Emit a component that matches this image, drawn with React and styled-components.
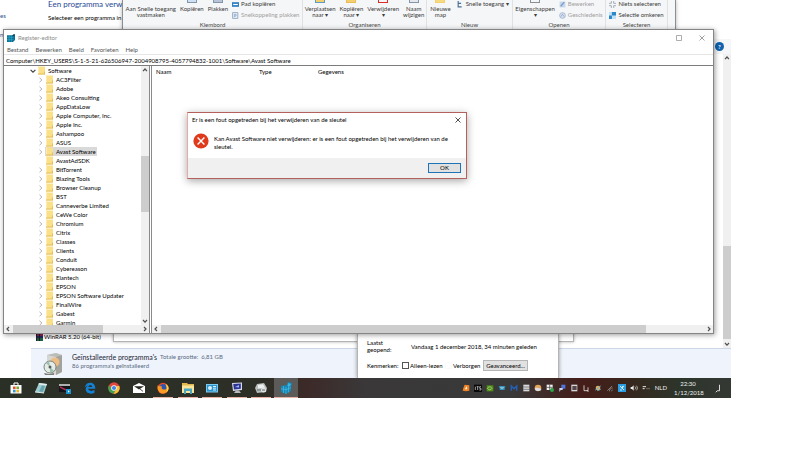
import React, { useState } from "react";
import styled, { createGlobalStyle } from "styled-components";

const treeKeys = [
  "AC3Filter",
  "Adobe",
  "Akeo Consulting",
  "AppDataLow",
  "Apple Computer, Inc.",
  "Apple Inc.",
  "Ashampoo",
  "ASUS",
  "Avast Software",
  "AvastAdSDK",
  "BitTorrent",
  "Blazing Tools",
  "Browser Cleanup",
  "BST",
  "Canneverbe Limited",
  "CeWe Color",
  "Chromium",
  "Citrix",
  "Classes",
  "Clients",
  "Conduit",
  "Cybereason",
  "Elantech",
  "EPSON",
  "EPSON Software Updater",
  "FinalWire",
  "Gabest",
  "Garmin",
];

const keysWithoutChildren = ["AvastAdSDK"];

const menuItems = ["Bestand", "Bewerken", "Beeld", "Favorieten", "Help"];

const REG_PATH =
  "Computer\\HKEY_USERS\\S-1-5-21-626506947-2004908795-4057794832-1001\\Software\\Avast Software";

// ---- icons ----

const Svg = ({ size = 12, children, ...rest }) => (
  <svg width={size} height={size} viewBox="0 0 12 12" aria-hidden="true" {...rest}>
    {children}
  </svg>
);

const FolderIcon = () => (
  <svg width="7" height="9" viewBox="0 0 7 9" aria-hidden="true">
    <path d="M0 .5h7v8H0z" fill="#fbe08a" />
    <path d="M0 .5h1v8H0z" fill="#fdebb0" />
    <path d="M6 5.5h1v3H0v-1h6z" fill="#e6bd58" />
  </svg>
);

const Chevron = ({ open }) => (
  <svg width="6" height="6" viewBox="0 0 6 6" aria-hidden="true">
    <path
      d={open ? "M.6 1.8L3 4.2l2.4-2.4" : "M1.5.8L3.9 3 1.5 5.2"}
      fill="none"
      stroke={open ? "#404040" : "#9a9a9a"}
      strokeWidth={open ? 1.2 : 0.8}
    />
  </svg>
);

const arrows = {
  up: "M1 4.2L3 2l2 2.2",
  down: "M1 2L3 4.2 5 2",
  left: "M4 1L2 3l2 2",
  right: "M2 1l2 2-2 2",
};

const Arrow = ({ dir }) => (
  <svg width="6" height="6" viewBox="0 0 6 6" aria-hidden="true">
    <path d={arrows[dir]} fill="none" stroke="#505050" strokeWidth="1.2" />
  </svg>
);

const RegIcon = ({ size = 8 }) => (
  <Svg size={size}>
    <path d="M0 2h8l4-2v9l-3 3H0z" fill="#0b6f95" />
    <path d="M0 5h10M0 8.5h10M3.3 2v10M6.6 2v10" stroke="#35b3d8" strokeWidth=".8" />
    <path d="M8.5 1.5L11 0v3H8.5z" fill="#12364a" />
  </Svg>
);

const ErrorIcon = () => (
  <svg width="16" height="16" viewBox="0 0 16 16" aria-hidden="true">
    <circle cx="8" cy="8" r="7.6" fill="#e03a1c" />
    <path d="M4.6 4.6l6.8 6.8M11.4 4.6l-6.8 6.8" stroke="#fff" strokeWidth="1.4" />
  </svg>
);

const CloseIcon = ({ color = "#222" }) => (
  <svg width="6" height="6" viewBox="0 0 6 6" aria-hidden="true">
    <path d="M.5.5l5 5M5.5.5l-5 5" stroke={color} strokeWidth=".8" />
  </svg>
);

const ProgramsIcon = () => (
  <svg width="20" height="24" viewBox="0 0 20 24" aria-hidden="true">
    <path d="M4 3l9-2 6 2v17l-6 3-9-3z" fill="#d6d6d2" />
    <path d="M13 4l6-1v17l-6 3z" fill="#a3a39e" />
    <path d="M4 3l9-2 6 2-6 2z" fill="#bcbcb8" />
    <circle cx="12" cy="10" r="4.5" fill="#edbd83" />
    <circle cx="7" cy="15" r="6" fill="#e5ebe7" stroke="#707975" strokeWidth=".9" />
    <path d="M7 15L3 11l3-2zM7 15l4 4-4 2z" fill="#9bbfac" />
    <circle cx="7" cy="15" r="1.5" fill="#59605c" />
    <path d="M1 21l5 1 5-1v2H2z" fill="#7c7c78" />
  </svg>
);

const WinRarIcon = () => (
  <svg width="7" height="8" viewBox="0 0 7 8" aria-hidden="true">
    <path d="M0 0h7v3H0z" fill="#8c2257" />
    <path d="M0 3h7v2H0z" fill="#212a68" />
    <path d="M0 5h7v3H0z" fill="#1d6044" />
    <path d="M0 0h1v8H0zM3 0h1v8H3z" fill="#20201e" />
  </svg>
);

const taskIcons = {
  store: (
    <>
      <path d="M4 3V1h4v2" fill="none" stroke="#fff" />
      <path d="M.5 3h11v8.5H.5z" fill="#fff" />
      <path d="M3 4.5h2.6v2.6H3z" fill="#e4542b" />
      <path d="M6.4 4.5H9v2.6H6.4z" fill="#7bab31" />
      <path d="M3 7.8h2.6v2.6H3z" fill="#2f95d3" />
      <path d="M6.4 7.8H9v2.6H6.4z" fill="#efb323" />
    </>
  ),
  notes: (
    <>
      <path d="M4 1l8 1-3 9-9-1z" fill="#9ccbd1" />
      <path d="M4 1l8 1-.5 1.4-8-1z" fill="#e4eeee" />
      <path d="M7 3.5l3 .5-2 6-4-.4z" fill="#6aa4ad" />
      <path d="M0 10l9 1" stroke="#dce8e6" />
    </>
  ),
  movie: (
    <>
      <path d="M0 2h11v2H0z" fill="#b0b0b0" />
      <path d="M0 4h11v6H0z" fill="#12161a" />
      <path d="M1 5l6 3" stroke="#a92d51" strokeWidth="1.5" />
      <path d="M7 7h5v5H7z" fill="#1c92cc" />
      <path d="M9 8.2v2.4l1.7-1.2z" fill="#fff" />
    </>
  ),
  edge: (
    <path
      d="M.8 5.8C1.2 2.6 3.3.7 6.3.7c3.2 0 5.1 2.3 5 6.1H4.2c.3 2 3.4 2.9 6.3 1.3v2.6C6.4 13 1.6 11 1.7 7.1 1.8 5.2 3 4 4.4 3.4 2.8 3.5 1.6 4.5.8 5.8zM4.3 5h3.9c0-2.3-3.6-2.3-3.9 0z"
      fill="#1581d2"
    />
  ),
  chrome: (
    <>
      <circle cx="6" cy="6" r="5.7" fill="#e1483a" />
      <path d="M1 3.2A5.7 5.7 0 0 0 5.6 11.7L8 7.5 4 7z" fill="#43a352" />
      <path d="M11.3 4A5.7 5.7 0 0 1 5.6 11.7L8.5 7V4z" fill="#f4c536" />
      <circle cx="6" cy="6" r="2.8" fill="#fff" />
      <circle cx="6" cy="6" r="2.1" fill="#4384e6" />
    </>
  ),
  mail: (
    <>
      <path d="M0 4l6-3 6 3v7H0z" fill="#fff" />
      <path d="M1 4.3h10L6 7.5z" fill="#25291f" />
      <path d="M7 7l3 2.4" stroke="#25291f" strokeWidth=".8" />
    </>
  ),
  firefox: (
    <>
      <circle cx="6" cy="6.3" r="5.5" fill="#ec4a27" />
      <circle cx="6.3" cy="5.5" r="3.5" fill="#2f55b4" />
      <path d="M.8 3C2 5 3 4 5 4.4 4 6 5 8 8 7.5c2 0 3-2.5 2.2-5C13 6 11 11 6.5 11.5 2.5 11.7-.3 8 .8 3z" fill="#fa9a23" />
      <path d="M8.3 1.7c4 2 4.2 6.2 1 8.6.8-3 .5-5.5-1-8.6z" fill="#fcd33b" />
    </>
  ),
  explorer: (
    <>
      <path d="M0 1h5l1 1h6v9H0z" fill="#e3b94f" />
      <path d="M0 3.5h12V11H0z" fill="#fbe49b" />
      <path d="M2 6.5h8V12H8V9H4v3H2z" fill="#4aa7c4" />
    </>
  ),
  control: (
    <>
      <path d="M0 2h12v8.5H0z" fill="#7cc9ef" />
      <path d="M1 3h10v6.5H1z" fill="#2b91cb" />
      <circle cx="4" cy="6" r="2" fill="#d8f0fb" />
      <path d="M7 4.5h3M7 6.2h3M7 8h3" stroke="#d8f0fb" />
    </>
  ),
  monitor: (
    <>
      <path d="M1 1l10-.5v7.5L2 9z" fill="#d8d9ec" />
      <path d="M2.2 2l7.6-.4v5.2L3 7.6z" fill="#2c3390" />
      <path d="M4 5l4-2v2.5z" fill="#9db5ee" />
      <path d="M5 8.5h3l2 2.5H3z" fill="#b9b9c2" />
    </>
  ),
  disk: (
    <>
      <path d="M2 2l7-1 3 5-1 4-9 1-2-5z" fill="#b8bdbd" />
      <path d="M3 3l5-.7 2 3.2-7 1z" fill="#eef0f0" />
      <circle cx="8.5" cy="8" r="2.5" fill="#dfe4e4" />
      <path d="M2 8h4M7 8h3" stroke="#646a6a" />
    </>
  ),
  regedit: (
    <>
      <path d="M1 4l6-1 1-3 4 1-1 4v4l-5 3-5-2z" fill="#1489b8" />
      <path d="M1 6.7l5 1 5-2M3.5 4v7M6 5v7M8.5 3v7.5" stroke="#58c0e4" strokeWidth=".6" fill="none" />
      <path d="M8 1l3 1-1 2.5-2.5-.5z" fill="#3ab4df" />
    </>
  ),
};

const taskButtons = [
  { id: "store", label: "Store" },
  { id: "notes", label: "Kladblok" },
  { id: "movie", label: "Movie Maker" },
  { id: "edge", label: "Edge" },
  { id: "chrome", label: "Chrome" },
  { id: "mail", label: "Mail" },
  { id: "firefox", label: "Firefox", running: true },
  { id: "explorer", label: "Verkenner", running: true },
  { id: "control", label: "Configuratiescherm", running: true },
  { id: "monitor", label: "Systeem", running: true },
  { id: "disk", label: "Schijfopruiming", running: true },
  { id: "regedit", label: "Register-editor", running: true, active: true },
];

const trayIcons = [
  <>
    <path d="M4 1l7 1v8l-5 1-5-1 1-4z" fill="#f18222" />
    <path d="M4 8l3-5 1 5z" fill="#fff0dd" />
  </>,
  <>
    <path d="M0 1h12v11H0z" fill="#080808" />
    <path d="M2 4v5M4 4h3M5.5 4v5M10.5 4H8.5v2.5h2V9H8" stroke="#e5e5e5" fill="none" />
  </>,
  <>
    <path d="M1 2h10v9H1z" fill="#4e8f16" />
    <path d="M2 6.5c2-3 5-3 7 0-2 3-5 3-7 0z" fill="none" stroke="#cfe6a6" />
  </>,
  <>
    <path d="M1 3h10l-1 6H3z" fill="#2c88b5" />
    <path d="M3 5h6M4 7h4" stroke="#c5e5f3" />
  </>,
  <path d="M2 10V3l4 4 4-4v7" fill="none" stroke="#2560b8" strokeWidth="2.2" />,
  <>
    <path d="M2 1h9v10H2z" fill="#d9d9d9" />
    <path d="M2 4.5h9M2 8h9" stroke="#55585a" />
  </>,
  <>
    <circle cx="6" cy="6" r="5" fill="#e1a55b" />
    <path d="M1 7c2-3 8-1 10 1-1 3-8 4-10-1z" fill="#d8dde8" />
  </>,
  <>
    <path d="M1 1h9v8H1z" fill="#f4f4f4" />
    <path d="M5.5 1v8M1 5h9" stroke="#333" />
    <circle cx="9" cy="9" r="3" fill="#2ba34a" />
  </>,
  <>
    <path d="M5 1h6v6H5z" fill="#5272dc" />
    <path d="M2 6h5v3H4l-2 3z" fill="#c8d3f4" />
  </>,
  <>
    <path d="M2 1h9v10H2z" fill="#d7d7d9" />
    <path d="M3.5 3H10v6H3.5z" fill="#53474c" />
  </>,
  <path d="M3 2v8h6V5M7 10l3 1" fill="none" stroke="#e8e8e8" strokeWidth="1.2" />,
  <>
    <circle cx="6" cy="6" r="3.5" fill="#ddab66" />
    <path d="M2 9l8-6M5 10l5-2" stroke="#69b6cc" strokeWidth="1.5" />
  </>,
  <path d="M2 10l7-7M5 11c0-3 2-5 5-5M8 11c0-1 1-2 2-2" fill="none" stroke="#a8a8a8" />,
  <>
    <path d="M0 0h12v12H0z" fill="#2c9de0" />
    <path d="M3 3l6 6M9 3L5 6M3 9h3M7 3v3" stroke="#e5f6ff" strokeWidth="1.3" />
  </>,
  <>
    <path d="M1 4.5h2L5.5 2v8L3 7.5H1z" fill="#eee" />
    <path d="M7.5 4c1 1 1 3 0 4M9.5 2.5c2 2 2 5 0 7" fill="none" stroke="#eee" />
  </>,
  <path d="M1 4h5M1 7h3M7 7h1M10 7h1" stroke="#e8e8e8" strokeWidth="1.5" />,
];

// ---- shared parts ----

const GlobalStyle = createGlobalStyle`
  * {
    box-sizing: border-box;
  }
  body {
    margin: 0;
    background: #fff;
    font-family: Lato, "Open Sans", sans-serif;
    font-size: 6px;
    line-height: 8px;
    color: #000;
  }
  button, input {
    font: inherit;
    color: inherit;
    margin: 0;
    padding: 0;
    border: none;
    background: none;
  }
  svg {
    display: block;
    flex: none;
  }
  h1, h2, p, ul {
    margin: 0;
    padding: 0;
    font-weight: 400;
  }
`;

const Page = styled.div`
  min-height: 100vh;
  padding: 0 69px 52px 0;
  display: flex;
`;

const Desktop = styled.div`
  flex: 1;
  display: flex;
  flex-direction: column;
  overflow: hidden;
`;

const Workspace = styled.main`
  position: relative;
  flex: 1;
  overflow: hidden;
`;

const ScrollTrack = styled.div`
  display: flex;
  flex-direction: ${(p) => (p.$vertical ? "column" : "row")};
  align-items: center;
  width: ${(p) => (p.$vertical ? "8px" : "auto")};
  height: ${(p) => (p.$vertical ? "auto" : "8px")};
  padding: ${(p) => (p.$vertical ? "1px 0" : "0 1px")};
  gap: 1px;
  background: #f0f0f0;
`;

const Space = styled.div`
  flex: ${(p) => p.$grow} 1 0;
`;

const Thumb = styled.div`
  flex: ${(p) => p.$grow} 1 0;
  align-self: stretch;
  background: #cdcdcd;
`;

const ScrollBar = ({ vertical, before, size, after }) => (
  <ScrollTrack $vertical={vertical}>
    <Arrow dir={vertical ? "up" : "left"} />
    <Space $grow={before} />
    <Thumb $grow={size} />
    <Space $grow={after} />
    <Arrow dir={vertical ? "down" : "right"} />
  </ScrollTrack>
);

// ---- installed programs window (at the back) ----

const Programs = styled.section`
  height: 100%;
  display: flex;
`;

const SideLinks = styled.nav`
  width: 31px;
  padding-top: 12px;
  display: flex;
  flex-direction: column;
  gap: 11px;
  color: #1d4f8f;

  a {
    color: inherit;
    text-decoration: none;
  }
`;

const ProgramsMain = styled.div`
  flex: 1;
  display: flex;
  flex-direction: column;
`;

const ProgramsBody = styled.div`
  flex: 1;
  display: flex;
  justify-content: space-between;
`;

const ProgramsText = styled.div`
  display: flex;
  flex-direction: column;
  justify-content: space-between;
  padding-bottom: 7px;

  h1 {
    padding: 0 17px;
    font-size: 8px;
    line-height: 8px;
    color: #1f4a94;
  }
  p {
    padding: 6px 17px;
  }
`;

const ProgramRow = styled.div`
  display: flex;
  align-items: center;
  gap: 1px;
  padding-left: 5px;
`;

const ScrollColumn = styled.div`
  width: 17px;
  padding-top: 39px;
  display: flex;
  flex-direction: column;
  align-items: flex-end;

  > :last-child {
    flex: 1;
  }
`;

const HelpStrip = styled.div`
  align-self: stretch;
  height: 15px;
  padding: 3px 1px;
  background: #f5f6f7;
`;

const HelpButton = styled.button`
  width: 9px;
  height: 9px;
  border-radius: 50%;
  background: #0f62ae;
  color: #fff;
  font-weight: 700;
  line-height: 8px;
`;

const DetailsBar = styled.div`
  height: 30px;
  display: flex;
  gap: 9px;
  padding: 3px 12px;
  border-top: 1px solid #ccd6e6;
  background: #eff3fb;
  color: #5a6b84;

  h2 {
    font-size: 7px;
    color: #1b2636;
  }
`;

const DetailsLine = styled.div`
  display: flex;
  align-items: center;
  gap: ${(p) => p.$gap || 3}px;
  height: 9px;
`;

// ---- explorer window with the ribbon ----

const Explorer = styled.section`
  position: absolute;
  top: 0;
  left: 122px;
  width: 554px;
  height: 60px;
  border: solid #8a8f94;
  border-width: 0 1px;
  background: #f5f6f7;
  box-shadow: 0 0 4px rgba(0, 0, 0, 0.3);
`;

const Ribbon = styled.div`
  display: flex;
  height: 29px;
`;

const RibbonGroup = styled.div`
  width: ${(p) => p.$width}px;
  display: flex;
  flex-direction: column;
  justify-content: space-between;
  border-right: 1px solid #dfe1e3;
  color: #4a4a4a;
  text-align: center;
`;

const RibbonTools = styled.div`
  display: flex;
  justify-content: center;
  gap: ${(p) => p.$gap || 4}px;
`;

const BigTool = styled.button`
  display: flex;
  flex-direction: column;
  align-items: center;
  line-height: 6px;
  white-space: pre;
  color: ${(p) => (p.disabled ? "#a0a0a0" : "#3c3c3c")};
`;

const ToolPicture = styled.span`
  width: 10px;
  height: 3px;
  margin-bottom: 3px;
  border: solid ${(p) => p.$edge || "#8397ab"};
  border-width: 0 1px 1px;
  background: ${(p) => p.$color};
`;

const SmallTools = styled.div`
  display: flex;
  flex-direction: column;
  gap: 3px;
`;

const SmallTool = styled.button`
  display: flex;
  align-items: center;
  gap: 2px;
  line-height: 8px;
  white-space: nowrap;
  color: ${(p) => (p.disabled ? "#a0a0a0" : "#3c3c3c")};
`;

const Big = ({ children, color, edge, disabled }) => (
  <BigTool disabled={disabled}>
    <ToolPicture $color={color} $edge={edge} />
    {children}
  </BigTool>
);

const Small = ({ children, icon, disabled }) => (
  <SmallTool disabled={disabled}>
    <Svg size={7}>{icon}</Svg>
    {children}
  </SmallTool>
);

const sheet = (
  <>
    <path d="M1 1h9v10H1z" fill="#e9f0f8" stroke="#8ea6c2" strokeWidth="1.5" />
    <path d="M4 9V4h3v3H4" fill="none" stroke="#6f92c0" />
  </>
);

const ExplorerWindow = () => (
  <Explorer>
    <Ribbon>
      <RibbonGroup $width={180}>
        <RibbonTools>
          <Big color="#f5f6f7" edge="#f5f6f7">{"Aan Snelle toegang\nvastmaken"}</Big>
          <Big color="#cfe0f4">Kopiëren</Big>
          <Big color="#b9c4d8">Plakken</Big>
          <SmallTools>
            <Small icon={<><path d="M0 2h12v8H0z" fill="#2f7fc2" /><path d="M2 6h8" stroke="#fff" strokeWidth="2" /></>}>
              Pad kopiëren
            </Small>
            <Small icon={sheet} disabled>Snelkoppeling plakken</Small>
          </SmallTools>
        </RibbonTools>
        Klembord
      </RibbonGroup>
      <RibbonGroup $width={124}>
        <RibbonTools>
          <Big color="#f3cf6d" edge="#5b9cc4">{"Verplaatsen\nnaar ▾"}</Big>
          <Big color="#f3cf6d" edge="#e6bd58">{"Kopiëren\nnaar ▾"}</Big>
          <Big color="#f5f6f7" edge="#e02b2b">{"Verwijderen\n▾"}</Big>
          <Big color="#e4e7eb">{"Naam\nwijzigen"}</Big>
        </RibbonTools>
        Organiseren
      </RibbonGroup>
      <RibbonGroup $width={86}>
        <RibbonTools $gap={6}>
          <Big color="#f7da7e" edge="#f3cf6d">{"Nieuwe\nmap"}</Big>
          <SmallTools>
            <Small icon={<path d="M2 0v10h6M2 4h5" fill="none" stroke="#4a7196" strokeWidth="2" />}>
              Snelle toegang ▾
            </Small>
          </SmallTools>
        </RibbonTools>
        Nieuw
      </RibbonGroup>
      <RibbonGroup $width={93}>
        <RibbonTools>
          <Big color="#f5f6f7" edge="#8a8f94">{"Eigenschappen\n▾"}</Big>
          <SmallTools>
            <Small icon={<><path d="M1 1h10v10H1z" fill="#c6d5ea" /><path d="M3 9l6-7" stroke="#7a9aca" strokeWidth="2" /></>} disabled>
              Bewerken
            </Small>
            <Small icon={<><circle cx="6" cy="6" r="5" fill="#d4deec" stroke="#90a7ca" /><path d="M3 8l3-4 3 4" fill="none" stroke="#7b96c2" /></>} disabled>
              Geschiedenis
            </Small>
          </SmallTools>
        </RibbonTools>
        Openen
      </RibbonGroup>
      <RibbonGroup $width={62}>
        <RibbonTools>
          <SmallTools>
            <Small icon={<path d="M4 0v4H0M8 0v4h4M4 12V8H0M8 12V8h4" fill="none" stroke="#9aa5b2" strokeWidth="1.5" />}>
              Niets selecteren
            </Small>
            <Small icon={<><path d="M0 0h12v12H0z" fill="#bfe0f6" /><path d="M5 0h7v6H5zM0 6h5v6H0z" fill="#2b87c8" /></>}>
              Selectie omkeren
            </Small>
          </SmallTools>
        </RibbonTools>
        Selecteren
      </RibbonGroup>
    </Ribbon>
  </Explorer>
);

// ---- bottom of the message window and the file properties ----

const LowerWindow = styled.div`
  position: absolute;
  left: 113px;
  bottom: 36px;
  width: 461px;
  height: 40px;
  border: 1px solid #b4b4b4;
  background: #fff;
  box-shadow: 0 0 3px rgba(0, 0, 0, 0.3);
`;

const Properties = styled.section`
  position: absolute;
  left: 357px;
  bottom: 0;
  width: 202px;
  padding: 0 10px 6px 9px;
  border: solid #b4b4b4;
  border-width: 0 1px;
  background: #fff;
  box-shadow: 0 0 4px rgba(0, 0, 0, 0.4);
`;

const PropertyRow = styled.div`
  display: grid;
  grid-template-columns: ${(p) => p.$columns};
  align-items: center;
  height: ${(p) => p.$height}px;
  line-height: 7px;
`;

const CheckLabel = styled.label`
  display: flex;
  align-items: center;
  gap: 1px;
`;

const CheckBox = styled.input.attrs({ type: "checkbox" })`
  appearance: none;
  width: 7px;
  height: 7px;
  border: 1px solid ${(p) => (p.$faint ? "#fafafa" : "#555")};
  background: #fff;
`;

const AdvancedButton = styled.button`
  height: 11px;
  border: 1px solid #b5b5b5;
  background: #e1e1e1;
`;

// ---- registry editor ----

const Editor = styled.section`
  position: absolute;
  top: 29px;
  right: 17px;
  bottom: 44px;
  left: 3px;
  display: flex;
  flex-direction: column;
  border: 1px solid #858585;
  background: #fff;
  box-shadow: 1px 1px 5px rgba(0, 0, 0, 0.4);
`;

const EditorTitle = styled.header`
  display: flex;
  align-items: center;
  gap: 3px;
  height: 15px;
  padding-left: 3px;
  color: #8c8c8c;

  h1 {
    flex: 1;
    font-size: 6px;
  }
`;

const WindowButtons = styled.div`
  display: flex;
`;

const WindowButton = styled.button`
  width: 23px;
  display: flex;
  justify-content: center;
`;

const MenuBar = styled.nav`
  display: flex;
  gap: 7px;
  height: 9px;
  padding-left: 3px;
  color: #555;
`;

const AddressBar = styled.input`
  width: 100%;
  height: 12px;
  padding: 0 2px;
  border-top: 1px solid #e6e6e6;
  border-bottom: 1px solid #7c7c7c;
  outline: none;
`;

const Panes = styled.div`
  flex: 1;
  min-height: 0;
  display: flex;
`;

const TreePane = styled.div`
  width: 146px;
  display: flex;
  flex-direction: column;
  border-right: 1px solid #8a8a8a;
`;

const TreeBody = styled.div`
  flex: 1;
  min-height: 0;
  display: flex;
`;

const Tree = styled.ul`
  flex: 1;
  overflow: hidden;
  list-style: none;
`;

const TreeItem = styled.li`
  display: flex;
  align-items: center;
  height: 9px;
  padding-left: ${(p) => (p.$root ? 26 : 34)}px;
`;

const Twisty = styled.span`
  width: 7px;
`;

const KeyButton = styled.button`
  display: flex;
  align-items: center;
  gap: 3px;
  height: 9px;
  padding: 0 1px;
  white-space: nowrap;
  background: ${(p) => (p.$selected ? "#d9d9d9" : "none")};
`;

const ValuePane = styled.div`
  flex: 1;
  display: flex;
  flex-direction: column;
  justify-content: space-between;
  margin-left: 1px;
  border-left: 1px solid #8a8a8a;
`;

const ValueTable = styled.table`
  width: 100%;
  table-layout: fixed;
  border-collapse: collapse;

  th {
    width: 103px;
    height: 11px;
    padding: 0 4px;
    text-align: left;
    font-weight: 400;
  }
  th:nth-child(2) {
    width: 59px;
  }
  th:last-child {
    width: auto;
  }
`;

const RegistryEditor = () => {
  const [selected, setSelected] = useState("Avast Software");

  return (
    <Editor>
      <EditorTitle>
        <RegIcon />
        <h1>Register-editor</h1>
        <WindowButtons>
          <WindowButton aria-label="Maximaliseren">
            <svg width="6" height="6" viewBox="0 0 6 6">
              <path d="M.5 5.5v-5h5v5z" fill="none" stroke="#999" strokeWidth=".8" />
            </svg>
          </WindowButton>
          <WindowButton aria-label="Sluiten">
            <CloseIcon color="#888" />
          </WindowButton>
        </WindowButtons>
      </EditorTitle>
      <MenuBar>
        {menuItems.map((item) => (
          <button key={item}>{item}</button>
        ))}
      </MenuBar>
      <AddressBar aria-label="Pad" defaultValue={REG_PATH} />
      <Panes>
        <TreePane>
          <TreeBody>
            <Tree>
              <TreeItem $root>
                <Twisty><Chevron open /></Twisty>
                <KeyButton><FolderIcon />Software</KeyButton>
              </TreeItem>
              {treeKeys.map((key) => (
                <TreeItem key={key}>
                  <Twisty>{!keysWithoutChildren.includes(key) && <Chevron />}</Twisty>
                  <KeyButton $selected={key === selected} onClick={() => setSelected(key)}>
                    <FolderIcon />
                    {key}
                  </KeyButton>
                </TreeItem>
              ))}
            </Tree>
            <ScrollBar vertical before={81} size={56} after={104} />
          </TreeBody>
          <ScrollBar before={0} size={86} after={36} />
        </TreePane>
        <ValuePane>
          <ValueTable>
            <thead>
              <tr>
                <th>Naam</th>
                <th>Type</th>
                <th>Gegevens</th>
              </tr>
            </thead>
          </ValueTable>
          <ScrollBar before={0} size={484} after={58} />
        </ValuePane>
      </Panes>
    </Editor>
  );
};

// ---- error message ----

const Dialog = styled.section`
  position: absolute;
  top: 112px;
  left: 187px;
  width: 280px;
  border: 1px solid #b4605c;
  border-left-color: #eba9a6;
  background: #fff;
  box-shadow: 0 2px 8px rgba(0, 0, 0, 0.35);
`;

const DialogTitle = styled.header`
  display: flex;
  align-items: center;
  justify-content: space-between;
  height: 14px;
  padding: 0 5px 0 4px;

  h2 {
    font-size: 6px;
  }
`;

const DialogBody = styled.div`
  display: flex;
  gap: 5px;
  height: 31px;
  padding: 6px 16px 0 5px;

  p {
    padding-top: 2px;
  }
`;

const DialogFooter = styled.footer`
  display: flex;
  justify-content: flex-end;
  padding: 5px;
  background: #f0f0f0;
`;

const OkButton = styled.button`
  width: 33px;
  height: 10px;
  border: 1px solid #1f74b8;
  background: #e1e1e1;
  line-height: 8px;
`;

// ---- taskbar ----

const Taskbar = styled.footer`
  display: flex;
  justify-content: space-between;
  height: 20px;
  padding-left: 4px;
  background: linear-gradient(
    90deg,
    #2b3026 0%,
    #2d2f27 36%,
    #3c2a28 42%,
    #3a3839 50%,
    #393939 70%,
    #451c18 80%,
    #35291f 87%,
    #2c352b 93%,
    #343833 100%
  );
  color: #f0f0f0;
`;

const TaskList = styled.div`
  display: flex;
  width: 294px;
`;

const TaskButton = styled.button`
  flex: 1;
  display: flex;
  align-items: center;
  justify-content: center;
  background-color: ${(p) => (p.$active ? "#5c5b59" : "transparent")};
  background-image: ${(p) => (p.$running ? "linear-gradient(#eab1a6, #eab1a6)" : "none")};
  background-position: bottom;
  background-size: ${(p) => (p.$active ? "24px" : "20px")} 1px;
  background-repeat: no-repeat;
`;

const Tray = styled.div`
  display: flex;
  align-items: center;
  padding-right: 10px;
`;

const TrayIcon = styled.button`
  width: 12px;
  display: flex;
  justify-content: center;
`;

const Language = styled.button`
  padding: 0 7px 0 3px;
`;

const Clock = styled.div`
  width: 28px;
  line-height: 9px;
  text-align: center;
`;

const NotificationButton = styled.button`
  margin-left: 10px;
`;

export default function App() {
  return (
    <Page>
      <GlobalStyle />
      <Desktop>
        <Workspace>
          <Programs>
            <SideLinks>
              <a href="#updates">es</a>
              <a href="#features">n</a>
            </SideLinks>
            <ProgramsMain>
              <ProgramsBody>
                <ProgramsText>
                  <div>
                    <h1>Een programma verwijderen</h1>
                    <p>Selecteer een programma in de lijst</p>
                  </div>
                  <ProgramRow>
                    <WinRarIcon />
                    WinRAR 5.20 (64-bit)
                  </ProgramRow>
                </ProgramsText>
                <ScrollColumn>
                  <HelpStrip>
                    <HelpButton>?</HelpButton>
                  </HelpStrip>
                  <ScrollBar vertical before={184} size={94} after={0} />
                </ScrollColumn>
              </ProgramsBody>
              <DetailsBar>
                <ProgramsIcon />
                <div>
                  <DetailsLine>
                    <h2>Geïnstalleerde programma's</h2>
                    <span>Totale grootte:</span>
                    <span>6,81 GB</span>
                  </DetailsLine>
                  <DetailsLine>86 programma's geïnstalleerd</DetailsLine>
                </div>
              </DetailsBar>
            </ProgramsMain>
          </Programs>

          <ExplorerWindow />
          <LowerWindow />

          <Properties>
            <PropertyRow $columns="44px 1fr" $height={24}>
              <span>Laatst<br />geopend:</span>
              <span>Vandaag 1 december 2018, 34 minuten geleden</span>
            </PropertyRow>
            <PropertyRow $columns="35px 43px 38px 45px" $height={14}>
              <span>Kenmerken:</span>
              <CheckLabel>
                <CheckBox />
                Alleen-lezen
              </CheckLabel>
              <CheckLabel>
                <CheckBox $faint />
                Verborgen
              </CheckLabel>
              <AdvancedButton>Geavanceerd...</AdvancedButton>
            </PropertyRow>
          </Properties>

          <RegistryEditor />

          <Dialog role="alertdialog" aria-labelledby="dialog-title">
            <DialogTitle>
              <h2 id="dialog-title">Er is een fout opgetreden bij het verwijderen van de sleutel</h2>
              <button aria-label="Sluiten"><CloseIcon /></button>
            </DialogTitle>
            <DialogBody>
              <ErrorIcon />
              <p>
                Kan Avast Software niet verwijderen: er is een fout opgetreden bij het verwijderen van de
                sleutel.
              </p>
            </DialogBody>
            <DialogFooter>
              <OkButton>OK</OkButton>
            </DialogFooter>
          </Dialog>
        </Workspace>

        <Taskbar>
          <TaskList>
            {taskButtons.map((t) => (
              <TaskButton key={t.id} aria-label={t.label} $running={t.running} $active={t.active}>
                <Svg>{taskIcons[t.id]}</Svg>
              </TaskButton>
            ))}
          </TaskList>
          <Tray>
            {trayIcons.map((icon, i) => (
              <TrayIcon key={i} aria-label={`Systeemvak ${i + 1}`}>
                <Svg size={8}>{icon}</Svg>
              </TrayIcon>
            ))}
            <Language>NLD</Language>
            <Clock>
              22:30
              <br />
              1/12/2018
            </Clock>
            <NotificationButton aria-label="Meldingen">
              <Svg size={9}>
                <path d="M10 1v8H7l-2 2" fill="none" stroke="#eee" strokeWidth="1.2" />
              </Svg>
            </NotificationButton>
          </Tray>
        </Taskbar>
      </Desktop>
    </Page>
  );
}
